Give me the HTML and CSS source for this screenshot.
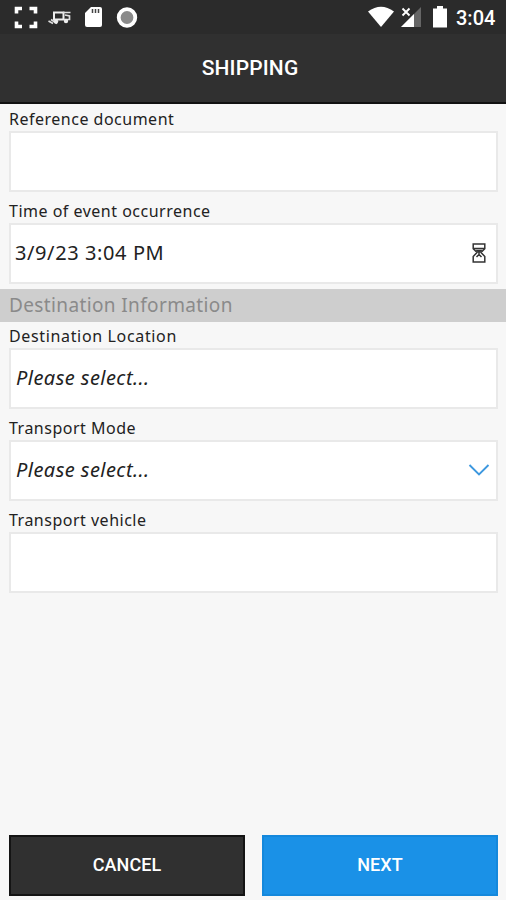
FILE: index.html
```html
<!DOCTYPE html>
<html lang="en">
<head>
<meta charset="utf-8">
<title>Shipping</title>
<link rel="stylesheet" href="styles.css">
</head>
<body>
<div class="status">
  <svg class="status-icons" width="140" height="34" viewBox="0 0 140 34">
    <path d="M16.500 13.500V8.500H22M29.500 8.500H35.500V13.500M35.500 21.500V26.500H29.500M22 26.500H16.500V21.500" fill="none" stroke="#fff" stroke-width="3.600"/>
    <path d="M54 12.500H63.500V19.500H54Z" fill="none" stroke="#eee" stroke-width="2"/>
    <path d="M63 12.500H70.500M65 15L69.500 16V19.500H64M48.500 21L53 23.500M51 19.500L57 23.500" stroke="#ddd" stroke-width="1.700" fill="none"/>
    <circle cx="56" cy="21.500" r="2.200" fill="#eee"/><circle cx="66" cy="21" r="2.200" fill="#eee"/>
    <path d="M91 7H100Q102 7 102 9V25Q102 27 100 27H87Q85 27 85 25V13Z" fill="#fff"/>
    <path d="M92.500 9V13M95.500 9V13M98.500 9V13" stroke="#444" stroke-width="1.500"/>
    <circle cx="127" cy="17.500" r="8.300" fill="#8a8a8a" stroke="#fff" stroke-width="3.800"/>
  </svg>
  <svg class="status-icons" width="84" height="34" viewBox="366 0 84 34">
    <path d="M368 11.500Q381 2 394 11.500L381 27Z" fill="#fff"/>
    <path d="M421 7V27H401Z" fill="#666"/>
    <path d="M414 14V27H401Z" fill="#fff"/>
    <path d="M402 8L410 16M410 8L402 16" stroke="#2b2b2b" stroke-width="4"/>
    <path d="M402.500 8.500L409.500 15.500M409.500 8.500L402.500 15.500" stroke="#fff" stroke-width="1.900"/>
    <path d="M437 6H443V8.500H447V27.500H433V8.500H437Z" fill="#fff"/>
  </svg>
  <span class="clock">3:04</span>
</div>
<header class="header"><span class="title">SHIPPING</span></header>
<main class="form">
  <div class="field"><label class="label">Reference document</label><div class="box"></div></div>
  <div class="field"><label class="label">Time of event occurrence</label>
    <div class="box"><span class="value">3/9/23 3:04 PM</span>
      <svg class="hourglass" width="14" height="20" viewBox="0 0 14 20" fill="none" stroke="#333" stroke-width="1.500"><path d="M1.200 1H12.800V5.800L9 9.500L12.800 13.500V19H1.200V13.500L5 9.500L1.200 5.800ZM1.500 5.500H12.500"/><path d="M5 7.500H9L7 9.500ZM7 9V11.500M4.500 14L7 11.500L9.500 14"/></svg>
    </div></div>
  <h2 class="section">Destination Information</h2>
  <div class="field"><label class="label wide">Destination Location</label><div class="box"><span class="placeholder">Please select...</span></div></div>
  <div class="field"><label class="label">Transport Mode</label>
    <div class="box"><span class="placeholder">Please select...</span>
      <svg class="chevron" width="22" height="14" viewBox="0 0 22 14" fill="none" stroke="#3d98df" stroke-width="1.900"><path d="M1.500 2L11 11.500L20.500 2"/></svg>
    </div></div>
  <div class="field"><label class="label">Transport vehicle</label><div class="box"></div></div>
</main>
<footer class="actions">
  <button class="button cancel">CANCEL</button>
  <button class="button next">NEXT</button>
</footer>
</body>
</html>
```
FILE: styles.css
```css
* { box-sizing: border-box; }
body {
  margin: 0;
  height: 900px;
  display: flex;
  flex-direction: column;
  background: #f7f7f7;
  color: #222;
  font-family: "Noto Sans", sans-serif;
}
.status {
  height: 34px;
  display: flex;
  align-items: center;
  background: #2b2b2b;
}
.status-icons { display: block; }
.status-icons + .status-icons { margin-left: auto; }
.clock {
  width: 56px;
  padding: 1px 0 0 6px;
  color: #fff;
  font: 500 20px/34px Roboto, sans-serif;
}
.header {
  height: 70px;
  padding: 0 6px 1px 0;
  display: flex;
  align-items: center;
  justify-content: center;
  background: #303030;
  border-bottom: 2px solid #121212;
  color: #fff;
  font: 500 21px/24px Roboto, sans-serif;
  letter-spacing: 0.15px;
}
.form { flex: 1; }
.field { padding: 0 8px 4px 9px; }
.label {
  display: block;
  height: 27px;
  padding-top: 4px;
  font-size: 16px;
  line-height: 23px;
  letter-spacing: 0.5px;
  white-space: nowrap;
}
.label.wide { letter-spacing: 0.65px; }
.box {
  height: 61px;
  padding: 0 8px 2px 4px;
  display: flex;
  align-items: center;
  justify-content: space-between;
  background: #fff;
  border: 2px solid #e9e9e9;
}
.value { font-size: 20px; letter-spacing: 0.6px; }
.placeholder {
  padding-left: 1px;
  font-size: 20px;
  font-style: italic;
  letter-spacing: 0.45px;
}
.hourglass { margin-right: 2px; }
.chevron { margin-right: -2px; }
.section {
  height: 33px;
  margin: 1px 0 -1px;
  padding-left: 9px;
  background: #cecece;
  color: #8a8a8a;
  font-size: 19px;
  font-weight: 400;
  line-height: 32px;
  letter-spacing: 0.37px;
}
.actions {
  height: 65px;
  padding: 0 8px 4px 9px;
  display: grid;
  grid-template-columns: 1fr 1fr;
  gap: 17px;
}
.button {
  padding: 0 0 2px;
  border: 2px solid #141414;
  background: #303030;
  color: #fff;
  font: 500 18px/24px Roboto, sans-serif;
  letter-spacing: 0.1px;
}
.next { background: #1a91e7; border-color: #1488dc; }
```
